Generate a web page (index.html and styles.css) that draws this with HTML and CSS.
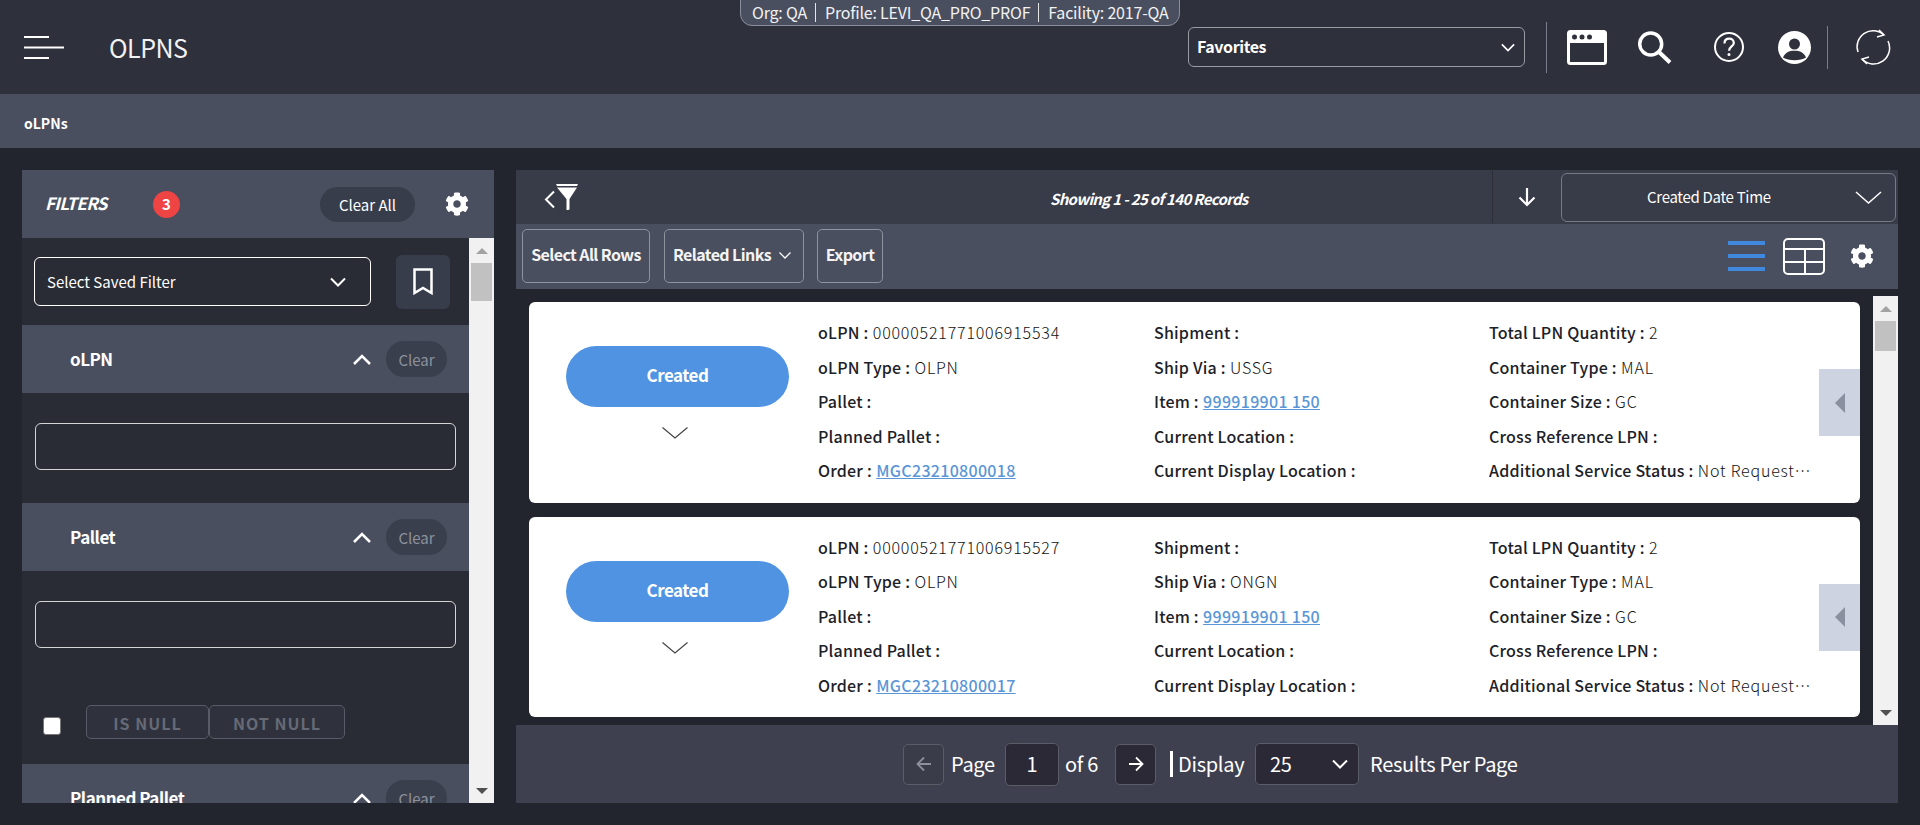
FILE: index.html
```html
<!DOCTYPE html>
<html lang="en">
<head>
  <meta charset="UTF-8" />
  <meta name="viewport" content="width=device-width, initial-scale=1.0"/>
  <title>OLPNS</title>
  <link rel="stylesheet" href="styles.css">
</head>
<body>

<svg class="defs" width="0" height="0">
  <symbol id="gear" viewBox="0 0 512 512">
    <path fill="currentColor" d="M487.4 315.7l-42.6-24.6c4.3-23.2 4.3-47 0-70.2l42.6-24.6c4.9-2.8 7.1-8.6 5.5-14-11.1-35.6-30-67.8-54.7-94.6-3.8-4.1-10-5.1-14.8-2.3L380.8 110c-17.9-15.4-38.5-27.3-60.8-35.1V25.8c0-5.6-3.9-10.5-9.4-11.7-36.7-8.2-74.3-7.8-109.2 0-5.5 1.2-9.4 6.1-9.4 11.7V75c-22.2 7.9-42.8 19.8-60.8 35.1L88.7 85.5c-4.9-2.8-11-1.9-14.8 2.3-24.7 26.7-43.6 58.9-54.7 94.6-1.7 5.4.6 11.2 5.5 14L67.3 221c-4.3 23.2-4.3 47 0 70.2l-42.6 24.6c-4.9 2.8-7.1 8.6-5.5 14 11.1 35.6 30 67.8 54.7 94.6 3.8 4.1 10 5.1 14.8 2.3l42.6-24.6c17.9 15.4 38.5 27.3 60.8 35.1v49.2c0 5.6 3.9 10.5 9.4 11.7 36.7 8.2 74.3 7.8 109.2 0 5.5-1.2 9.4-6.1 9.4-11.7v-49.2c22.2-7.9 42.8-19.8 60.8-35.1l42.6 24.6c4.9 2.8 11 1.9 14.8-2.3 24.7-26.7 43.6-58.9 54.7-94.6 1.5-5.5-.7-11.3-5.6-14.1zM256 336c-44.1 0-80-35.9-80-80s35.9-80 80-80 80 35.9 80 80-35.9 80-80 80z"/>
  </symbol>
  <symbol id="chev-down" viewBox="0 0 16 10">
    <path fill="none" stroke="currentColor" stroke-width="2" d="M1 1.500 8 8.500l7-7"/>
  </symbol>
</svg>

<header class="topbar">
  <div class="context-pill">
    <span>Org: QA</span><span>Profile: LEVI_QA_PRO_PROF</span><span>Facility: 2017-QA</span>
  </div>
  <svg class="menu-icon" width="40" height="24" viewBox="0 0 40 24">
    <path stroke="#fff" stroke-width="2" d="M0 2h25M0 12.500h40M0 23h25"/>
  </svg>
  <h1 class="page-title">OLPNS</h1>

  <div class="favorites">
    <span>Favorites</span>
    <svg class="favorites-chev" width="14" height="9"><use href="#chev-down"/></svg>
  </div>
  <div class="top-divider tall"></div>
  <svg class="icon-window" width="40" height="35" viewBox="0 0 40 35">
    <rect x="1.500" y="1.500" width="37" height="32" rx="2" fill="none" stroke="#fff" stroke-width="3"/>
    <rect x="1" y="1" width="38" height="12" rx="2" fill="#fff"/>
    <circle cx="7.500" cy="7" r="2.500" fill="#2e303c"/>
    <circle cx="15" cy="7" r="2.500" fill="#2e303c"/>
    <circle cx="22.500" cy="7" r="2.500" fill="#2e303c"/>
  </svg>
  <svg class="icon-search" width="34" height="33" viewBox="0 0 34 33">
    <circle cx="12.700" cy="13" r="11" fill="none" stroke="#fff" stroke-width="3.500"/>
    <path stroke="#fff" stroke-width="4" d="M21 21l11 10.500"/>
  </svg>
  <svg class="icon-help" width="30" height="30" viewBox="0 0 30 30">
    <circle cx="15" cy="15" r="14" fill="none" stroke="#fff" stroke-width="2"/>
    <path fill="none" stroke="#fff" stroke-width="2.200" d="M10.500 11.500c0-3 2-4.800 4.700-4.800s4.600 1.800 4.600 4.200c0 3.600-4.700 3.600-4.700 7.800"/>
    <circle cx="15" cy="22.500" r="1.500" fill="#fff"/>
  </svg>
  <svg class="icon-user" width="33" height="33" viewBox="0 0 33 33">
    <circle cx="16.500" cy="16.500" r="16.500" fill="#fff"/>
    <circle cx="16.500" cy="13" r="5.500" fill="#2e303c"/>
    <path fill="#2e303c" d="M5 26.500c2-5 6-6.800 11.500-6.800s9.500 1.800 11.500 6.800c-3 1.800-7 2.700-11.500 2.700S8 28.300 5 26.500z"/>
  </svg>
  <div class="top-divider short"></div>
  <svg class="icon-refresh" width="36" height="38" viewBox="0 0 36 38">
    <path fill="none" stroke="#fff" stroke-width="1.500" d="M3 24A16 16 0 0 1 29 7"/>
    <path fill="none" stroke="#fff" stroke-width="1.500" d="M33 13A16 16 0 0 1 7 31"/>
    <path fill="none" stroke="#fff" stroke-width="1.500" d="M24 2l5 5-7 2"/>
    <path fill="none" stroke="#fff" stroke-width="1.500" d="M12 36l-5-5 7-2"/>
  </svg>
</header>

<nav class="crumbs">oLPNs</nav>

<div class="workspace">

  <!-- Filters -->
  <aside class="filters">
    <div class="filters-head">
      <span class="filters-title">FILTERS</span>
      <span class="filters-badge">3</span>
      <button class="clear-all">Clear All</button>
      <svg class="filters-gear" width="24" height="24"><use href="#gear"/></svg>
    </div>
    <div class="filters-body">
      <div class="filters-scroll">
        <div class="saved-row">
          <div class="saved-select">
            <span>Select Saved Filter</span>
            <svg width="16" height="10"><use href="#chev-down"/></svg>
          </div>
          <button class="bookmark">
            <svg width="20" height="27" viewBox="0 0 20 27">
              <path fill="none" stroke="#fff" stroke-width="2.500" d="M1.500 1.500h17v23.500L10 20l-8.500 5z"/>
            </svg>
          </button>
        </div>

        <div class="section-head">
          <span class="section-name">oLPN</span>
          <svg class="section-chev" width="18" height="11" viewBox="0 0 18 11"><path fill="none" stroke="#fff" stroke-width="2.500" d="M1 10l8-8 8 8"/></svg>
          <button class="section-clear">Clear</button>
        </div>
        <div class="section-body">
          <input class="filter-input" type="text">
        </div>

        <div class="section-head">
          <span class="section-name">Pallet</span>
          <svg class="section-chev" width="18" height="11" viewBox="0 0 18 11"><path fill="none" stroke="#fff" stroke-width="2.500" d="M1 10l8-8 8 8"/></svg>
          <button class="section-clear">Clear</button>
        </div>
        <div class="section-body tall">
          <input class="filter-input" type="text">
          <div class="null-row">
            <input class="null-check" type="checkbox">
            <button class="null-btn first">IS NULL</button><button class="null-btn">NOT NULL</button>
          </div>
        </div>

        <div class="section-head">
          <span class="section-name">Planned Pallet</span>
          <svg class="section-chev" width="18" height="11" viewBox="0 0 18 11"><path fill="none" stroke="#fff" stroke-width="2.500" d="M1 10l8-8 8 8"/></svg>
          <button class="section-clear">Clear</button>
        </div>
      </div>
      <div class="scrollbar">
        <div class="sb-arrow up"></div>
        <div class="sb-thumb side"></div>
        <div class="sb-arrow down"></div>
      </div>
    </div>
  </aside>

  <!-- Results -->
  <main class="results">
    <div class="records-bar">
      <div class="filter-toggle">
        <svg width="34" height="26" viewBox="0 0 34 26">
          <path fill="none" stroke="#fff" stroke-width="2" d="M10 7.500 2 15.500l8 8"/>
          <path fill="#fff" d="M13 0h22l-1 2H14zM14 3.500h20L26.500 15v10.500l-3 1V15z" transform="translate(-1)"/>
        </svg>
      </div>
      <div class="records-count">Showing 1 - 25 of 140 Records</div>
      <div class="sort-dir">
        <svg width="18" height="20" viewBox="0 0 18 20">
          <path fill="none" stroke="#fff" stroke-width="2.200" d="M9 1v17M1.500 10.500 9 18l7.500-7.500"/>
        </svg>
      </div>
      <div class="sort-select">
        <span>Created Date Time</span>
        <svg width="27" height="13" viewBox="0 0 27 13"><path fill="none" stroke="#fff" stroke-width="1.500" d="M1 1l12.500 11L26 1"/></svg>
      </div>
    </div>

    <div class="actions-bar">
      <button class="action-btn">Select All Rows</button>
      <button class="action-btn links">Related Links
        <svg width="12" height="7" viewBox="0 0 12 7"><path fill="none" stroke="#fff" stroke-width="1.300" d="M.5.500 6 6l5.500-5.500"/></svg>
      </button>
      <button class="action-btn export">Export</button>
      <div class="view-icons">
        <svg class="icon-list" width="37" height="30" viewBox="0 0 37 30">
          <path stroke="#3f88dd" stroke-width="4" d="M0 2h37M0 15h37M0 28h37"/>
        </svg>
        <svg class="icon-table" width="42" height="37" viewBox="0 0 42 37">
          <rect x="1" y="1" width="40" height="35" rx="4" fill="none" stroke="#fff" stroke-width="2"/>
          <path stroke="#fff" stroke-width="2" fill="none" d="M1 11h40M1 24h40M22 11v25"/>
        </svg>
        <svg class="view-gear" width="24" height="24"><use href="#gear"/></svg>
      </div>
    </div>

    <div class="list-area">
      <div class="cards">

        <article class="card">
          <div class="card-status">
            <div class="status-pill">Created</div>
            <svg width="26" height="12" viewBox="0 0 26 12"><path fill="none" stroke="#444" stroke-width="1.200" d="M.5.500 13 11 25.500.500"/></svg>
          </div>
          <div class="card-col first">
            <div class="field"><b>oLPN :</b> 00000521771006915534</div>
            <div class="field"><b>oLPN Type :</b> OLPN</div>
            <div class="field"><b>Pallet :</b></div>
            <div class="field"><b>Planned Pallet :</b></div>
            <div class="field"><b>Order :</b> <a href="#">MGC23210800018</a></div>
          </div>
          <div class="card-col second">
            <div class="field"><b>Shipment :</b></div>
            <div class="field"><b>Ship Via :</b> USSG</div>
            <div class="field"><b>Item :</b> <a href="#">999919901 150</a></div>
            <div class="field"><b>Current Location :</b></div>
            <div class="field"><b>Current Display Location :</b></div>
          </div>
          <div class="card-col third">
            <div class="field"><b>Total LPN Quantity :</b> 2</div>
            <div class="field"><b>Container Type :</b> MAL</div>
            <div class="field"><b>Container Size :</b> GC</div>
            <div class="field"><b>Cross Reference LPN :</b></div>
            <div class="field"><b>Additional Service Status :</b> Not Requested</div>
          </div>
          <div class="card-tab"></div>
        </article>

        <article class="card">
          <div class="card-status">
            <div class="status-pill">Created</div>
            <svg width="26" height="12" viewBox="0 0 26 12"><path fill="none" stroke="#444" stroke-width="1.200" d="M.5.500 13 11 25.500.500"/></svg>
          </div>
          <div class="card-col first">
            <div class="field"><b>oLPN :</b> 00000521771006915527</div>
            <div class="field"><b>oLPN Type :</b> OLPN</div>
            <div class="field"><b>Pallet :</b></div>
            <div class="field"><b>Planned Pallet :</b></div>
            <div class="field"><b>Order :</b> <a href="#">MGC23210800017</a></div>
          </div>
          <div class="card-col second">
            <div class="field"><b>Shipment :</b></div>
            <div class="field"><b>Ship Via :</b> ONGN</div>
            <div class="field"><b>Item :</b> <a href="#">999919901 150</a></div>
            <div class="field"><b>Current Location :</b></div>
            <div class="field"><b>Current Display Location :</b></div>
          </div>
          <div class="card-col third">
            <div class="field"><b>Total LPN Quantity :</b> 2</div>
            <div class="field"><b>Container Type :</b> MAL</div>
            <div class="field"><b>Container Size :</b> GC</div>
            <div class="field"><b>Cross Reference LPN :</b></div>
            <div class="field"><b>Additional Service Status :</b> Not Requested</div>
          </div>
          <div class="card-tab"></div>
        </article>

      </div>
      <div class="scrollbar list">
        <div class="sb-arrow up"></div>
        <div class="sb-thumb main"></div>
        <div class="sb-arrow down"></div>
      </div>
    </div>

    <div class="pager">
      <button class="page-btn off">
        <svg width="16" height="16" viewBox="0 0 16 16"><path fill="none" stroke="#8d909b" stroke-width="1.800" d="M15 8H2M8 1.500 1.500 8 8 14.500"/></svg>
      </button>
      <span class="page-word">Page</span>
      <div class="page-num">1</div>
      <span class="page-of">of 6</span>
      <button class="page-btn next">
        <svg width="16" height="16" viewBox="0 0 16 16"><path fill="none" stroke="#fff" stroke-width="1.800" d="M1 8h13M8 1.500 14.500 8 8 14.500"/></svg>
      </button>
      <span class="page-display"><span class="page-bar"></span>Display</span>
      <div class="page-size">
        <span>25</span>
        <svg width="16" height="10"><use href="#chev-down"/></svg>
      </div>
      <span class="page-results">Results Per Page</span>
    </div>
  </main>
</div>

</body>
</html>
```

FILE: styles.css
```css
* {
  box-sizing: border-box;
}
body {
  font-family: "Noto Sans CJK JP", "Noto Sans", sans-serif;
  background-color: #22252e;
  color: #fff;
  margin: 0;
  height: 825px;
  overflow: hidden;
  line-height: 1.2;
}
button, input {
  font-family: inherit;
}
.defs {
  position: absolute;
}

/* top bar */
.topbar {
  position: relative;
  height: 94px;
  background-color: #2e303c;
  display: flex;
  align-items: center;
  padding-left: 24px;
}
.context-pill {
  position: absolute;
  left: 740px;
  top: -1px;
  width: 440px;
  height: 27px;
  display: flex;
  align-items: center;
  padding-left: 11px;
  background-color: #4a4f5f;
  border: 1px solid #8b8f9c;
  border-radius: 0 0 12px 12px;
  font-size: 16px;
  letter-spacing: -0.2px;
  color: #f2f2f2;
}
.context-pill span + span {
  border-left: 1px solid #e5e5e5;
  margin-left: 8px;
  padding-left: 9px;
}
.menu-icon {
  flex: none;
}
.page-title {
  margin: 0 0 0 45px;
  font-size: 25px;
  font-weight: 400;
  letter-spacing: -0.5px;
  color: #f2f2f2;
  flex: 1;
}
.favorites {
  width: 337px;
  height: 40px;
  display: flex;
  align-items: center;
  justify-content: space-between;
  padding: 0 9px 0 8px;
  border: 1px solid #9a9ca4;
  border-radius: 6px;
  font-size: 16px;
  font-weight: 700;
  letter-spacing: -0.4px;
}
.favorites-chev {
  color: #fff;
}
.top-divider {
  width: 1px;
  background-color: #7b7e8a;
}
.top-divider.tall {
  height: 51px;
  margin-left: 21px;
}
.top-divider.short {
  height: 43px;
  margin-left: 16px;
}
.icon-window {
  margin-left: 20px;
}
.icon-search {
  margin-left: 31px;
}
.icon-help {
  margin-left: 42px;
}
.icon-user {
  margin-left: 34px;
}
.icon-refresh {
  margin: 0 29px 0 27px;
}

.crumbs {
  height: 54px;
  background-color: #4a4f5f;
  display: flex;
  align-items: center;
  padding: 4px 0 0 24px;
  font-size: 14px;
  font-weight: 700;
}

.workspace {
  display: flex;
  gap: 22px;
  padding: 22px 22px 0;
}

/* filters */
.filters {
  width: 472px;
  height: 633px;
  display: flex;
  flex-direction: column;
}
.filters-head {
  height: 68px;
  flex: none;
  background-color: #4a4f5f;
  display: flex;
  align-items: center;
  padding-left: 23px;
}
.filters-title {
  width: 108px;
  padding-bottom: 2px;
  font-size: 17px;
  font-weight: 700;
  font-style: italic;
  letter-spacing: -0.6px;
}
.filters-badge {
  width: 27px;
  height: 27px;
  border-radius: 50%;
  background-color: #ef4444;
  display: flex;
  align-items: center;
  justify-content: center;
  font-size: 15px;
  font-weight: 700;
}
.clear-all {
  margin-left: 140px;
  width: 95px;
  height: 35px;
  border: none;
  border-radius: 18px;
  background-color: #383d4b;
  color: #fff;
  font-size: 15px;
}
.filters-gear {
  margin-left: 30px;
  color: #fff;
}
.filters-body {
  flex: 1;
  min-height: 0;
  display: flex;
}
.filters-scroll {
  width: 447px;
  background-color: #292c35;
  overflow: hidden;
}
.saved-row {
  height: 87px;
  display: flex;
  align-items: center;
  padding-left: 12px;
}
.saved-select {
  width: 337px;
  height: 49px;
  display: flex;
  align-items: center;
  justify-content: space-between;
  padding: 0 24px 0 12px;
  border: 1px solid #fff;
  border-radius: 6px;
  font-size: 15px;
}
.bookmark {
  margin-left: 25px;
  width: 54px;
  height: 54px;
  border: none;
  border-radius: 6px;
  background-color: #383d4b;
  display: flex;
  align-items: center;
  justify-content: center;
}
.section-head {
  height: 68px;
  background-color: #4a4f5f;
  display: flex;
  align-items: center;
  padding-left: 48px;
}
.section-name {
  width: 283px;
  font-size: 17px;
  font-weight: 700;
  letter-spacing: -0.5px;
}
.section-clear {
  margin-left: 15px;
  width: 61px;
  height: 36px;
  border: none;
  border-radius: 18px;
  background-color: #3a3f4d;
  color: #8d919c;
  font-size: 15px;
}
.section-body {
  height: 110px;
  padding: 30px 13px 0;
}
.section-body.tall {
  height: 193px;
}
.filter-input {
  display: block;
  width: 421px;
  height: 47px;
  background: transparent;
  border: 1px solid #d4d4d4;
  border-radius: 6px;
}
.null-row {
  margin-top: 57px;
  display: flex;
  align-items: center;
}
.null-check {
  margin: 7px 25px 0 8px;
  width: 18px;
  height: 18px;
  appearance: none;
  background-color: #fff;
  border: 1px solid #777;
  border-radius: 3px;
}
.null-btn {
  height: 34px;
  width: 136px;
  padding: 2px 0 0;
  background-color: #2f323d;
  border: 1px solid #585c68;
  border-radius: 5px;
  color: #666a76;
  font-size: 16px;
  font-weight: 700;
  letter-spacing: 1px;
}
.null-btn.first {
  width: 123px;
}

/* scrollbars */
.scrollbar {
  width: 25px;
  flex: none;
  background-color: #f1f1f1;
  display: flex;
  flex-direction: column;
  align-items: center;
}
.scrollbar.list {
  margin-top: 7px;
}
.sb-arrow {
  height: 25px;
  display: flex;
  align-items: center;
  justify-content: center;
  flex: none;
}
.sb-arrow.up::before {
  content: "";
  border: 6px solid transparent;
  border-top: 0;
  border-bottom: 6px solid #a3a3a3;
}
.sb-arrow.down {
  margin-top: auto;
}
.sb-arrow.down::before {
  content: "";
  border: 6px solid transparent;
  border-bottom: 0;
  border-top: 6px solid #505050;
}
.sb-thumb {
  width: 21px;
  background-color: #c1c1c1;
}
.sb-thumb.side {
  height: 38px;
}
.sb-thumb.main {
  height: 30px;
}

/* results */
.results {
  width: 1382px;
  height: 633px;
  display: flex;
  flex-direction: column;
}
.records-bar {
  height: 54px;
  flex: none;
  background-color: #383b48;
  display: flex;
  align-items: center;
}
.filter-toggle {
  width: 534px;
  padding-left: 28px;
  display: flex;
}
.records-count {
  flex: 1;
  padding-top: 3px;
  font-size: 15px;
  font-weight: 700;
  font-style: italic;
  letter-spacing: -0.68px;
}
.sort-dir {
  width: 69px;
  height: 52px;
  border-left: 1px solid #2c2e39;
  display: flex;
  align-items: center;
  justify-content: center;
}
.sort-select {
  width: 335px;
  height: 49px;
  margin-right: 2px;
  position: relative;
  display: flex;
  align-items: center;
  justify-content: space-between;
  padding: 0 13px 0 85px;
  border: 1px solid #777a85;
  border-radius: 6px;
  font-size: 15px;
  letter-spacing: -0.3px;
}
.actions-bar {
  height: 65px;
  flex: none;
  background-color: #4a4f5f;
  display: flex;
  align-items: center;
  padding: 0 0 1px 6px;
  gap: 14px;
}
.action-btn {
  width: 128px;
  height: 54px;
  padding: 0 0 5px;
  background: transparent;
  border: 1px solid #8e929e;
  border-radius: 5px;
  color: #f4f4f4;
  font-size: 16px;
  font-weight: 700;
  letter-spacing: -0.6px;
  white-space: nowrap;
}
.action-btn.links {
  width: 140px;
  text-align: left;
  padding-left: 8px;
}
.action-btn.export {
  width: 66px;
  margin-left: -1px;
}
.action-btn.links svg {
  margin-left: 5px;
  vertical-align: 2px;
}
.view-icons {
  margin-left: auto;
  display: flex;
  align-items: center;
  color: #fff;
  padding-right: 24px;
}
.icon-table {
  margin-left: 18px;
}
.view-gear {
  margin-left: 25px;
}
.list-area {
  height: 436px;
  flex: none;
  display: flex;
  padding-left: 13px;
}
.cards {
  width: 1331px;
  margin-right: 13px;
  padding-top: 13px;
  display: flex;
  flex-direction: column;
  gap: 14px;
}
.card {
  position: relative;
  height: 200.5px;
  background-color: #fff;
  border-radius: 6px;
  color: #22262e;
  display: flex;
}
.card-status {
  width: 289px;
  padding: 44px 0 0 37px;
}
.status-pill {
  width: 223px;
  height: 61px;
  padding-bottom: 2px;
  border-radius: 31px;
  background-color: #4f93e2;
  color: #fff;
  display: flex;
  align-items: center;
  justify-content: center;
  font-size: 17px;
  font-weight: 700;
  letter-spacing: -0.5px;
}
.card-status svg {
  display: block;
  margin: 20px 0 0 96px;
}
.card-col {
  padding-top: 13px;
}
.card-col.first {
  width: 336px;
}
.card-col.second {
  width: 335px;
}
.card-col.third {
  width: 324px;
}
.field {
  height: 34.6px;
  line-height: 34.6px;
  font-family: "Noto Sans CJK KR", "Noto Sans", sans-serif;
  font-size: 16px;
  font-weight: 300;
  white-space: nowrap;
  overflow: hidden;
  text-overflow: ellipsis;
  color: #111;
  letter-spacing: 0.8px;
}
.field b {
  font-weight: 500;
  color: #1d2128;
  letter-spacing: 0.2px;
}
.field a {
  font-weight: 500;
  color: #5a96d6;
  letter-spacing: 0.3px;
}
.card-tab {
  position: absolute;
  right: 0;
  top: 67px;
  width: 41px;
  height: 67px;
  background-color: #cdd3e0;
  display: flex;
  align-items: center;
  justify-content: center;
}
.card-tab::before {
  content: "";
  border: 10px solid transparent;
  border-left: 0;
  border-right: 10px solid #8a90a0;
}

/* pager */
.pager {
  height: 78px;
  flex: none;
  background-color: #3e4050;
  display: flex;
  align-items: center;
  padding-left: 387px;
  font-size: 20px;
  letter-spacing: -0.3px;
}
.page-btn {
  flex: none;
  width: 41px;
  height: 41px;
  border: 1px solid #5a5c68;
  border-radius: 5px;
  background-color: #2a2935;
  display: flex;
  align-items: center;
  justify-content: center;
  padding: 0;
}
.page-btn.off {
  background-color: #3a3c4a;
}
.page-word {
  margin-left: 7px;
  width: 54px;
}
.page-num {
  width: 54px;
  height: 43px;
  border: 1px solid #5a5c68;
  border-radius: 5px;
  background-color: #2a2935;
  display: flex;
  align-items: center;
  justify-content: center;
}
.page-of {
  margin-left: 6px;
  width: 50px;
}
.page-display {
  margin-left: 14px;
  width: 85px;
  display: flex;
  align-items: center;
}
.page-bar {
  width: 3px;
  height: 26px;
  background-color: #fff;
  margin-right: 5px;
}
.page-size {
  width: 104px;
  height: 42px;
  border: 1px solid #5a5c68;
  border-radius: 5px;
  background-color: #2a2935;
  display: flex;
  align-items: center;
  justify-content: space-between;
  padding: 0 10px 0 14px;
}
.page-results {
  margin-left: 11px;
}
```
